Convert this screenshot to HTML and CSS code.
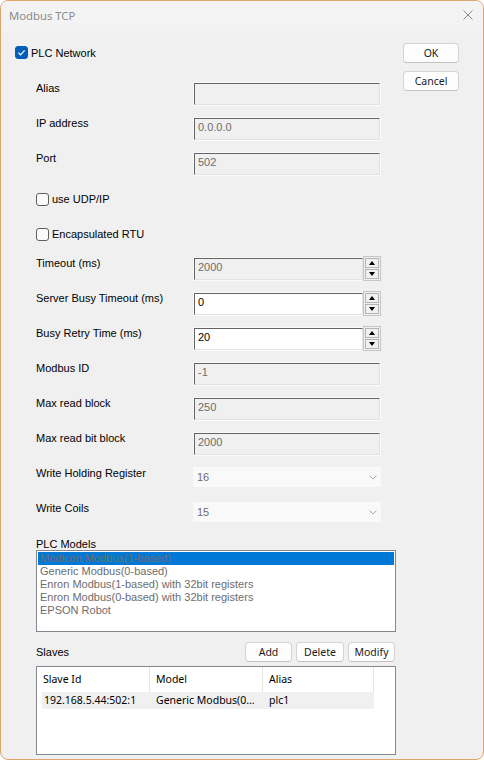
FILE: index.html
```html
<!DOCTYPE html>
<html lang="en">
<head>
    <meta charset="UTF-8">
    <meta name="viewport" content="width=device-width, initial-scale=1.0">
    <title>Modbus TCP</title>
    <link rel="stylesheet" href="styles.css">
</head>
<body>
    <div class="window">
        <div class="titlebar">
            <span class="title">Modbus TCP</span>
            <svg class="close" width="10" height="10" viewBox="0 0 10 10">
                <path d="M0.5 0.5 L9.5 9.5 M9.5 0.5 L0.5 9.5" stroke="#8a8a8a" stroke-width="1" fill="none"/>
            </svg>
        </div>
        <div class="content">
            <div class="main">
                <label class="check check-top">
                    <span class="box on">
                        <svg width="9" height="9" viewBox="0 0 9 9"><path d="M1.5 4.8 L3.6 6.8 L7.6 2.4" stroke="#fff" stroke-width="1.2" fill="none"/></svg>
                    </span>
                    PLC Network
                </label>

                <div class="form">
                    <div class="row"><span class="label">Alias</span><input class="field" disabled value=""></div>
                    <div class="row"><span class="label">IP address</span><input class="field" disabled value="0.0.0.0"></div>
                    <div class="row"><span class="label">Port</span><input class="field" disabled value="502"></div>
                    <div class="row"><label class="check"><span class="box"></span>use UDP/IP</label></div>
                    <div class="row"><label class="check"><span class="box"></span>Encapsulated RTU</label></div>
                    <div class="row">
                        <span class="label">Timeout (ms)</span>
                        <div class="spin-field">
                            <input class="field" disabled value="2000">
                            <div class="spin"><span><i class="up"></i></span><span><i class="down"></i></span></div>
                        </div>
                    </div>
                    <div class="row">
                        <span class="label">Server Busy Timeout (ms)</span>
                        <div class="spin-field">
                            <input class="field on" value="0">
                            <div class="spin"><span><i class="up"></i></span><span><i class="down"></i></span></div>
                        </div>
                    </div>
                    <div class="row">
                        <span class="label">Busy Retry Time (ms)</span>
                        <div class="spin-field">
                            <input class="field on" value="20">
                            <div class="spin"><span><i class="up"></i></span><span><i class="down"></i></span></div>
                        </div>
                    </div>
                    <div class="row"><span class="label">Modbus ID</span><input class="field" disabled value="-1"></div>
                    <div class="row"><span class="label">Max read block</span><input class="field" disabled value="250"></div>
                    <div class="row"><span class="label">Max read bit block</span><input class="field" disabled value="2000"></div>
                    <div class="row">
                        <span class="label">Write Holding Register</span>
                        <div class="combo"><span>16</span><svg width="8" height="5" viewBox="0 0 8 5"><path d="M0.5 0.5 L4 4 L7.5 0.5" stroke="#a8a8a8" fill="none"/></svg></div>
                    </div>
                    <div class="row">
                        <span class="label">Write Coils</span>
                        <div class="combo"><span>15</span><svg width="8" height="5" viewBox="0 0 8 5"><path d="M0.5 0.5 L4 4 L7.5 0.5" stroke="#a8a8a8" fill="none"/></svg></div>
                    </div>
                </div>

                <div class="section-label">PLC Models</div>
                <ul class="listbox">
                    <li class="sel">Modicon Modbus(1-based)</li>
                    <li>Generic Modbus(0-based)</li>
                    <li>Enron Modbus(1-based) with 32bit registers</li>
                    <li>Enron Modbus(0-based) with 32bit registers</li>
                    <li>EPSON Robot</li>
                </ul>

                <div class="slaves-bar">
                    <span>Slaves</span>
                    <div class="btns">
                        <button class="btn add">Add</button>
                        <button class="btn delete">Delete</button>
                        <button class="btn modify">Modify</button>
                    </div>
                </div>
                <div class="listview">
                    <div class="lv-head">
                        <span class="c1">Slave Id</span>
                        <span class="c2">Model</span>
                        <span class="c3">Alias</span>
                    </div>
                    <div class="lv-row">
                        <span class="c1">192.168.5.44:502:1</span>
                        <span class="c2">Generic Modbus(0…</span>
                        <span class="c3">plc1</span>
                    </div>
                </div>
            </div>
            <div class="side">
                <button class="btn">OK</button>
                <button class="btn">Cancel</button>
            </div>
        </div>
    </div>
</body>
</html>
```

FILE: styles.css
```css
body {
    margin: 0;
    background: #ffffff;
    font-family: "Liberation Sans", Arial, sans-serif;
    font-size: 11px;
    color: #000;
}
.window {
    width: 484px;
    height: 760px;
    box-sizing: border-box;
    border: 1px solid #dfa46d;
    border-radius: 8px;
    overflow: hidden;
    background: #f0f0f0;
    display: flex;
    flex-direction: column;
}
.titlebar {
    height: 30px;
    flex: none;
    box-sizing: border-box;
    background: #f3f3f3;
    display: flex;
    align-items: center;
    justify-content: space-between;
    padding: 0 10px 2px 8px;
}
.title {
    font-family: "Noto Sans", sans-serif;
    font-size: 11.3px;
    color: #8c8c8c;
}
.content {
    flex: 1;
    display: flex;
    gap: 7px;
    padding: 12px 24px 0 14px;
}
.main {
    flex: 1;
}
.side {
    width: 56px;
    display: flex;
    flex-direction: column;
    gap: 8px;
}
.btn {
    height: 20px;
    box-sizing: border-box;
    border: 1px solid #d3d3d3;
    border-bottom-color: #c2c2c2;
    border-radius: 4px;
    background: #fdfdfd;
    font-family: "Noto Sans", sans-serif;
    font-size: 10.5px;
    color: #1b1b1b;
    padding: 0;
    line-height: 17px;
}

/* checkboxes */
.check {
    display: flex;
    align-items: center;
    gap: 3px;
    height: 13px;
}
.check-top {
    margin: 3px 0 23px;
}
.box {
    width: 13px;
    height: 13px;
    box-sizing: border-box;
    border: 1px solid #5f5f5f;
    border-radius: 3px;
    background: #fbfbfb;
    display: flex;
    align-items: center;
    justify-content: center;
}
.box.on {
    background: #005fb8;
    border-color: #005fb8;
}

/* form rows */
.form {
    margin-left: 21px;
}
.row {
    display: grid;
    grid-template-columns: 157px 188px;
    align-items: start;
    height: 35px;
    line-height: 13px;
}
.row > .check {
    grid-column: 1 / 3;
    margin-top: 6px;
}
.field {
    width: 186px;
    height: 22px;
    margin: 1px;
    box-sizing: border-box;
    border: 1px solid;
    border-color: #646464 #e3e3e3 #e3e3e3 #646464;
    box-shadow: 0 0 0 1px #fafafa;
    background: #f0f0f0;
    color: #6d6d6d;
    font: inherit;
    padding: 0 3px 4px;
    outline: none;
}
.field.on {
    background: #fff;
    color: #000;
}
.spin-field {
    display: flex;
    align-items: flex-start;
}
.spin-field .field {
    width: 170px;
    margin-right: 0;
}
.spin {
    width: 18px;
    height: 25px;
    margin-top: -1px;
    box-sizing: border-box;
    border: 1px solid #c6c6c6;
    padding: 1px;
    display: flex;
    flex-direction: column;
    gap: 1px;
    background: #f0f0f0;
    position: relative;
    z-index: 1;
}
.spin span {
    flex: 1;
    border: 1px solid #b4b4b4;
    display: flex;
    align-items: center;
    justify-content: center;
}
.spin i {
    width: 0;
    height: 0;
    border-left: 3.5px solid transparent;
    border-right: 3.5px solid transparent;
}
.spin .up {
    border-bottom: 4px solid #000;
}
.spin .down {
    border-top: 4px solid #000;
}
.combo {
    width: 188px;
    height: 20px;
    box-sizing: border-box;
    background: #f9f9f9;
    color: #6d6d6d;
    display: flex;
    align-items: center;
    justify-content: space-between;
    padding: 0 4px;
}

/* lists */
.section-label {
    margin: 1px 0 0 21px;
    line-height: 12px;
}
.listbox {
    margin: 0 0 0 21px;
    width: 360px;
    height: 82px;
    box-sizing: border-box;
    border: 1px solid #828790;
    background: #fff;
    padding: 1px 1px 0 1px;
    list-style: none;
    color: #6d6d6d;
}
.listbox li {
    line-height: 13px;
    padding-left: 2px;
}
.listbox .sel {
    background: #0078d7;
}
.slaves-bar {
    margin: 10px 0 0 21px;
    width: 359px;
    display: flex;
    align-items: center;
    justify-content: space-between;
}
.btns {
    display: flex;
    gap: 4px;
}
.btns .add { width: 47px; }
.btns .delete { width: 48px; }
.btns .modify { width: 47px; }
.listview {
    margin: 4px 0 0 21px;
    width: 360px;
    height: 89px;
    box-sizing: border-box;
    border: 1px solid #828790;
    background: #fff;
    font-family: "Noto Sans", sans-serif;
    font-size: 10.5px;
}
.lv-head {
    display: flex;
    height: 25px;
    line-height: 25px;
}
.lv-head span {
    box-sizing: border-box;
    border-right: 1px solid #e5e5e5;
    padding-left: 6px;
}
.lv-head .c1 { width: 113px; }
.lv-head .c2 { width: 113px; }
.lv-head .c3 { width: 111px; }
.lv-row {
    display: flex;
    margin-left: 5px;
    width: 332px;
    height: 17px;
    line-height: 17px;
    background: #f0f0f0;
    white-space: nowrap;
}
.lv-row span {
    box-sizing: border-box;
    padding-left: 6px;
    overflow: hidden;
}
.lv-row .c1 { width: 108px; padding-left: 2px; }
.lv-row .c2 { width: 113px; }
.lv-row .c3 { width: 111px; }
```
